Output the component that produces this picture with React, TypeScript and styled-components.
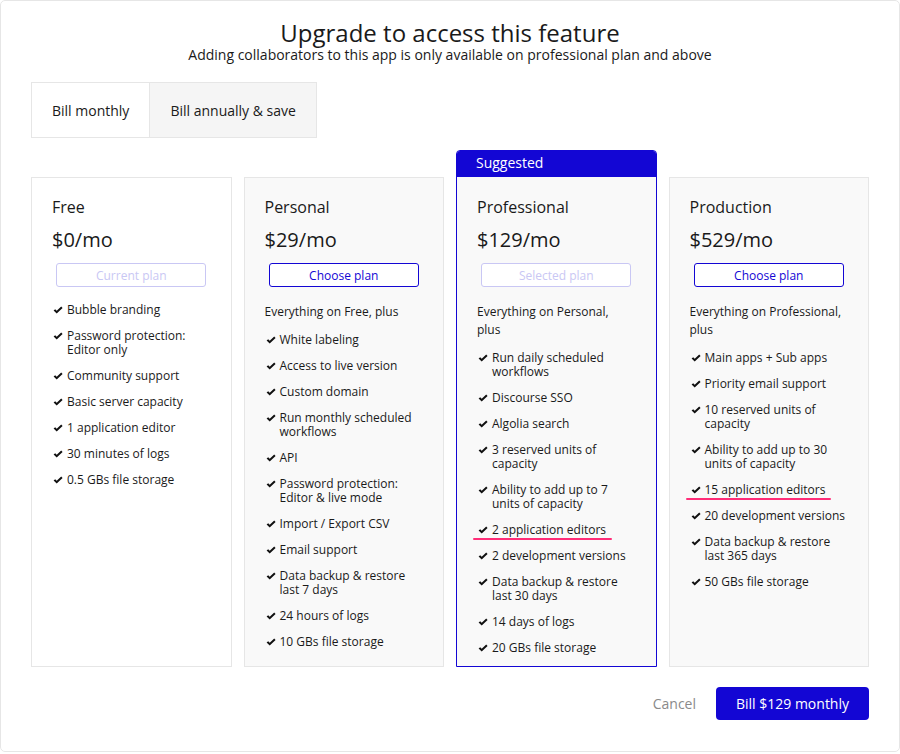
import React from "react";
import styled, { createGlobalStyle, css } from "styled-components";

const BLUE = "#1306d4";

const Global = createGlobalStyle`
  html, body { margin: 0; padding: 0; background: #fff; }
  body { font-family: "Open Sans", "Liberation Sans", sans-serif; color: #1a1a1a; }
  * { box-sizing: border-box; }
`;

const Page = styled.div`
  width: 900px;
  height: 752px;
  border: 1px solid #e6e6e6;
  border-radius: 5px;
  padding: 18px 30px 0;
  display: flex;
  flex-direction: column;
`;

const Header = styled.header`
  text-align: center;
`;

const Title = styled.h1`
  margin: 0;
  font-size: 24px;
  line-height: 27px;
  font-weight: 400;
  color: #1a1a1a;
`;

const Subtitle = styled.p`
  margin: 0;
  font-size: 14px;
  line-height: 18px;
  color: #1a1a1a;
`;

const Toggle = styled.div`
  display: flex;
  align-self: flex-start;
  margin-top: 18px;
  border: 1px solid #e6e6e6;
`;

const ToggleOption = styled.button<{ $active?: boolean }>`
  font-family: inherit;
  font-size: 14px;
  color: #1a1a1a;
  height: 54px;
  padding: 0 20px;
  border: none;
  background: ${(p) => (p.$active ? "#ffffff" : "#f5f5f5")};
  & + & { border-left: 1px solid #e6e6e6; }
`;

const Cards = styled.div`
  margin-top: 12px;
  display: grid;
  grid-template-columns: repeat(4, 1fr);
  grid-template-rows: 27px auto;
  column-gap: 12px;
`;

const Card = styled.section<{ $bg?: string }>`
  grid-row: 2;
  background: ${(p) => p.$bg || "#f9f9f9"};
  border: 1px solid #e6e6e6;
  padding: 17px 20px 12px;
  display: flex;
  flex-direction: column;
`;

const SuggestedCol = styled.section`
  grid-row: 1 / span 2;
  border: 1px solid ${BLUE};
  border-radius: 4px 4px 0 0;
  background: #f9f9f9;
  display: flex;
  flex-direction: column;
`;

const SuggestedHead = styled.div`
  background: ${BLUE};
  color: #fff;
  font-size: 14px;
  height: 26px;
  line-height: 24px;
  padding: 0 19px;
  border-radius: 3px 3px 0 0;
`;

const SuggestedBody = styled.div`
  padding: 18px 20px 11px;
  display: flex;
  flex-direction: column;
`;

const PlanName = styled.h2`
  margin: 0;
  font-size: 16px;
  line-height: 24px;
  font-weight: 400;
`;

const Price = styled.div`
  margin-top: 8px;
  font-size: 20px;
  line-height: 26px;
`;

const PlanButton = styled.button<{ $disabled?: boolean }>`
  margin: 10px auto 0;
  width: 150px;
  height: 24px;
  border-radius: 3px;
  font-family: inherit;
  font-size: 12px;
  background: #fff;
  padding: 0;
  ${(p) =>
    p.$disabled
      ? css`
          border: 1px solid #c9c7f4;
          color: #c9c7f4;
        `
      : css`
          border: 1px solid ${BLUE};
          color: ${BLUE};
        `}
`;

const Intro = styled.p`
  margin: 16px 0 0;
  font-size: 12px;
  line-height: 18px;
`;

const List = styled.ul<{ $afterIntro?: boolean }>`
  list-style: none;
  margin: ${(p) => (p.$afterIntro ? "12px" : "16px")} 0 0;
  padding: 0 0 0 1px;
  display: flex;
  flex-direction: column;
  align-items: flex-start;
  gap: 12px;
`;

const Item = styled.li<{ $marked?: boolean }>`
  position: relative;
  display: flex;
  align-items: flex-start;
  gap: 4px;
  font-size: 12px;
  line-height: 14px;
  ${(p) =>
    p.$marked &&
    css`
      &::after {
        content: "";
        position: absolute;
        left: -5px;
        right: -6px;
        bottom: -3px;
        height: 2px;
        border-radius: 1px;
        background: #ff2d78;
      }
    `}
`;

const ItemText = styled.span``;

const Check = styled.svg`
  flex: none;
  width: 10px;
  height: 14px;
`;

const Footer = styled.footer`
  margin-top: 20px;
  display: flex;
  justify-content: flex-end;
  align-items: center;
  gap: 20px;
`;

const CancelBtn = styled.button`
  font-family: inherit;
  font-size: 14px;
  color: #8a8a8a;
  border: none;
  background: none;
  padding: 0;
`;

const BillBtn = styled.button`
  font-family: inherit;
  font-size: 14px;
  color: #fff;
  background: ${BLUE};
  border: none;
  border-radius: 4px;
  height: 33px;
  width: 153px;
`;

const CheckIcon = () => (
  <Check viewBox="0 0 10 14">
    <path
      d="M0.6 7.6 L2.2 6.2 L3.7 7.8 L8.2 3.6 L9.6 5 L3.7 10.6 Z"
      fill="#111"
    />
  </Check>
);

type Plan = {
  name: string;
  price: string;
  button: string;
  disabled?: boolean;
  intro?: string;
  features: string[];
  marked?: number;
};

const plans: Plan[] = [
  {
    name: "Free",
    price: "$0/mo",
    button: "Current plan",
    disabled: true,
    features: [
      "Bubble branding",
      "Password protection:\nEditor only",
      "Community support",
      "Basic server capacity",
      "1 application editor",
      "30 minutes of logs",
      "0.5 GBs file storage",
    ],
  },
  {
    name: "Personal",
    price: "$29/mo",
    button: "Choose plan",
    intro: "Everything on Free, plus",
    features: [
      "White labeling",
      "Access to live version",
      "Custom domain",
      "Run monthly scheduled\nworkflows",
      "API",
      "Password protection:\nEditor & live mode",
      "Import / Export CSV",
      "Email support",
      "Data backup & restore\nlast 7 days",
      "24 hours of logs",
      "10 GBs file storage",
    ],
  },
  {
    name: "Professional",
    price: "$129/mo",
    button: "Selected plan",
    disabled: true,
    intro: "Everything on Personal,\nplus",
    marked: 5,
    features: [
      "Run daily scheduled\nworkflows",
      "Discourse SSO",
      "Algolia search",
      "3 reserved units of\ncapacity",
      "Ability to add up to 7\nunits of capacity",
      "2 application editors",
      "2 development versions",
      "Data backup & restore\nlast 30 days",
      "14 days of logs",
      "20 GBs file storage",
    ],
  },
  {
    name: "Production",
    price: "$529/mo",
    button: "Choose plan",
    intro: "Everything on Professional,\nplus",
    marked: 4,
    features: [
      "Main apps + Sub apps",
      "Priority email support",
      "10 reserved units of\ncapacity",
      "Ability to add up to 30\nunits of capacity",
      "15 application editors",
      "20 development versions",
      "Data backup & restore\nlast 365 days",
      "50 GBs file storage",
    ],
  },
];

const lines = (s: string) =>
  s.split("\n").map((l, i) => (
    <React.Fragment key={i}>
      {i > 0 && <br />}
      {l}
    </React.Fragment>
  ));

const PlanContent = ({ plan }: { plan: Plan }) => (
  <>
    <PlanName>{plan.name}</PlanName>
    <Price>{plan.price}</Price>
    <PlanButton $disabled={plan.disabled}>{plan.button}</PlanButton>
    {plan.intro && <Intro>{lines(plan.intro)}</Intro>}
    <List $afterIntro={!!plan.intro}>
      {plan.features.map((f, i) => (
        <Item key={i} $marked={plan.marked === i}>
          <CheckIcon />
          <ItemText>{lines(f)}</ItemText>
        </Item>
      ))}
    </List>
  </>
);

export default function App() {
  return (
    <>
      <Global />
      <Page>
        <Header>
          <Title>Upgrade to access this feature</Title>
          <Subtitle>Adding collaborators to this app is only available on professional plan and above</Subtitle>
        </Header>
        <Toggle>
          <ToggleOption $active>Bill monthly</ToggleOption>
          <ToggleOption>Bill annually &amp; save</ToggleOption>
        </Toggle>
        <Cards>
          <Card $bg="#ffffff">
            <PlanContent plan={plans[0]} />
          </Card>
          <Card>
            <PlanContent plan={plans[1]} />
          </Card>
          <SuggestedCol>
            <SuggestedHead>Suggested</SuggestedHead>
            <SuggestedBody>
              <PlanContent plan={plans[2]} />
            </SuggestedBody>
          </SuggestedCol>
          <Card>
            <PlanContent plan={plans[3]} />
          </Card>
        </Cards>
        <Footer>
          <CancelBtn>Cancel</CancelBtn>
          <BillBtn>Bill $129 monthly</BillBtn>
        </Footer>
      </Page>
    </>
  );
}
